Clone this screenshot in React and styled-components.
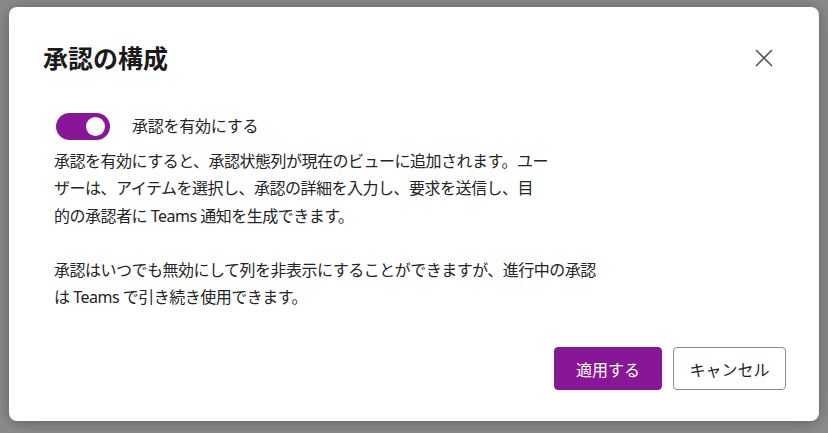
import styled, { createGlobalStyle } from "styled-components";

const GlobalStyle = createGlobalStyle`
  html, body {
    margin: 0;
    padding: 0;
    background: #8c8c8c;
  }
  body {
    font-family: "Segoe UI", "Noto Sans", "Noto Sans CJK JP", sans-serif;
    color: #242424;
  }
`;

const Page = styled.div`
  width: 828px;
  height: 433px;
  padding: 7px 9px;
  box-sizing: border-box;
`;

const Dialog = styled.div`
  width: 810px;
  height: 414px;
  box-sizing: border-box;
  background: #fff;
  border-radius: 8px;
  box-shadow: 0 0 24px rgba(0, 0, 0, 0.22), 0 2px 8px rgba(0, 0, 0, 0.14);
  padding: 35px 33px 31px 34px;
  display: flex;
  flex-direction: column;
`;

const Header = styled.div`
  display: flex;
  align-items: center;
  justify-content: space-between;
`;

const Title = styled.h2`
  margin: 0;
  font-size: 25px;
  line-height: 32px;
  font-weight: 600;
  color: #1a1a1a;
`;

const CloseButton = styled.button`
  width: 32px;
  height: 32px;
  margin-right: 6px;
  border: none;
  background: transparent;
  padding: 0;
  display: flex;
  align-items: center;
  justify-content: center;
  color: #5c5c5c;
  cursor: pointer;
`;

const Body = styled.div`
  padding-left: 11px;
  margin-top: 39px;
  flex: 1;
`;

const ToggleRow = styled.label`
  display: flex;
  align-items: center;
  gap: 22px;
  height: 27px;
`;

const Track = styled.span`
  width: 54px;
  height: 27px;
  margin-left: 2px;
  border-radius: 14px;
  background: ${(p) => (p.$on ? "#881798" : "#fff")};
  display: flex;
  align-items: center;
  justify-content: ${(p) => (p.$on ? "flex-end" : "flex-start")};
  padding: 0 5px;
  box-sizing: border-box;
`;

const Knob = styled.span`
  width: 19px;
  height: 19px;
  border-radius: 50%;
  background: #fff;
`;

const Label = styled.span`
  font-size: 16px;
  line-height: 27px;
  letter-spacing: -0.25px;
`;

const Paragraph = styled.p`
  margin: 8px 0 0;
  font-size: 16px;
  line-height: 27.3px;
  letter-spacing: -0.5px;
  white-space: nowrap;
  & + & {
    margin-top: 27.3px;
  }
`;

const Footer = styled.div`
  display: flex;
  justify-content: flex-end;
  gap: 11px;
`;

const Button = styled.button`
  height: 43px;
  width: ${(p) => (p.$primary ? "108px" : "113px")};
  box-sizing: border-box;
  border-radius: 4px;
  font-family: inherit;
  font-size: 16px;
  padding: 0;
  cursor: pointer;
  background: ${(p) => (p.$primary ? "#881798" : "#fff")};
  color: ${(p) => (p.$primary ? "#fff" : "#242424")};
  border: 1px solid ${(p) => (p.$primary ? "#881798" : "#8a8a8a")};
`;

const CloseIcon = () => (
  <svg width="18" height="18" viewBox="0 0 18 18" fill="none">
    <path d="M1 1L17 17M17 1L1 17" stroke="currentColor" strokeWidth="1.6" />
  </svg>
);

const App = () => {
  return (
    <>
      <GlobalStyle />
      <Page>
        <Dialog>
          <Header>
            <Title>承認の構成</Title>
            <CloseButton aria-label="閉じる">
              <CloseIcon />
            </CloseButton>
          </Header>
          <Body>
            <ToggleRow>
              <Track $on>
                <Knob />
              </Track>
              <Label>承認を有効にする</Label>
            </ToggleRow>
            <Paragraph>
              承認を有効にすると、承認状態列が現在のビューに追加されます。ユー
              <br />
              ザーは、アイテムを選択し、承認の詳細を入力し、要求を送信し、目
              <br />
              的の承認者に Teams 通知を生成できます。
            </Paragraph>
            <Paragraph>
              承認はいつでも無効にして列を非表示にすることができますが、進行中の承認
              <br />
              は Teams で引き続き使用できます。
            </Paragraph>
          </Body>
          <Footer>
            <Button $primary>適用する</Button>
            <Button>キャンセル</Button>
          </Footer>
        </Dialog>
      </Page>
    </>
  );
};

export default App;
